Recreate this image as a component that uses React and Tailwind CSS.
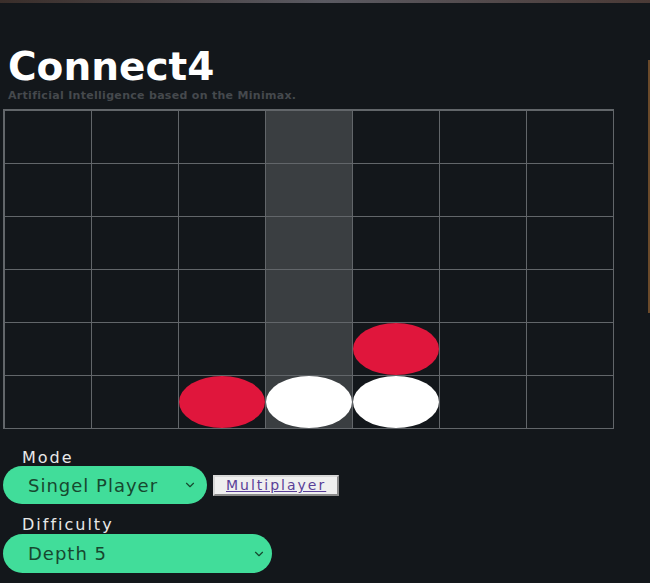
import React, { useState } from 'react';
import { ChevronDown } from 'lucide-react';

// board[row][col]: 0 empty, 1 red, 2 white
const initialBoard = [
    [0, 0, 0, 0, 0, 0, 0],
    [0, 0, 0, 0, 0, 0, 0],
    [0, 0, 0, 0, 0, 0, 0],
    [0, 0, 0, 0, 0, 0, 0],
    [0, 0, 0, 0, 1, 0, 0],
    [0, 0, 1, 2, 2, 0, 0],
];

const App = () => {
    const [board] = useState(initialBoard);
    const [hoverCol, setHoverCol] = useState(3);

    return (
        <div className="relative w-[650px] h-[583px] bg-[#13171b] overflow-hidden" style={{ fontFamily: '"DejaVu Sans", sans-serif' }}>
            {/* top strip */}
            <div className="h-[3px] w-full bg-gradient-to-r from-[#3a2e2a] via-[#5a5a62] to-[#4a3a36]" />
            <div className="absolute right-0 top-[60px] w-[2px] h-[253px] bg-[#6b4a2a]" />

            <div className="pt-[44px]">
                <h1 className="pl-[8px] text-[39px] leading-none font-bold text-white">Connect4</h1>
                <p className="pl-[8px] mt-[4px] text-[11px] leading-none font-bold tracking-[0.3px] text-[#45494d]">Artificial Intelligence based on the Minimax.</p>

                {/* Board */}
                <div className="ml-[3px] mt-[8px] w-[611px] grid grid-cols-7 border-l-2 border-t-2 border-[#62666a]">
                    {board.map((row, r) =>
                        row.map((cell, c) => (
                            <div
                                key={`${r}-${c}`}
                                onMouseEnter={() => setHoverCol(c)}
                                className={`h-[53px] border-r border-b border-[#62666a] flex ${c === hoverCol ? 'bg-[#3a3e41]' : ''}`}
                            >
                                {cell === 1 && <div className="w-full h-full rounded-[50%] bg-[#e0163c]" />}
                                {cell === 2 && <div className="w-full h-full rounded-[50%] bg-white" />}
                            </div>
                        ))
                    )}
                </div>

                {/* Controls */}
                <div className="mt-[21px] pl-[3px]">
                    <label className="block pl-[19px] text-[16px] leading-none tracking-[2px] text-[#e8e8e8]">Mode</label>
                    <div className="flex items-center gap-[6px]">
                        <div className="w-[204px] h-[38px] rounded-full bg-[#41dd9a] flex items-center justify-between pl-[25px] pr-[10px]">
                            <span className="text-[18px] tracking-[1px] text-[#17482f]">Singel Player</span>
                            <ChevronDown size={14} className="text-[#17482f]" strokeWidth={2} />
                        </div>
                        <button className="h-[21px] px-[11px] bg-[#efefef] border-2 border-[#8a8a8a] border-t-[#d8d8d8] border-l-[#d8d8d8] flex items-center">
                            <span className="text-[14px] tracking-[2px] leading-none underline text-[#5a3f98]">Multiplayer</span>
                        </button>
                    </div>

                    <label className="block mt-[13px] pl-[19px] text-[16px] leading-none tracking-[2px] text-[#e8e8e8]">Difficulty</label>
                    <div className="mt-[1px] w-[269px] h-[39px] rounded-full bg-[#41dd9a] flex items-center justify-between pl-[25px] pr-[6px]">
                        <span className="text-[18px] tracking-[1px] text-[#17482f]">Depth 5</span>
                        <ChevronDown size={14} className="text-[#17482f]" strokeWidth={2} />
                    </div>
                </div>
            </div>
        </div>
    );
};

export default App;
